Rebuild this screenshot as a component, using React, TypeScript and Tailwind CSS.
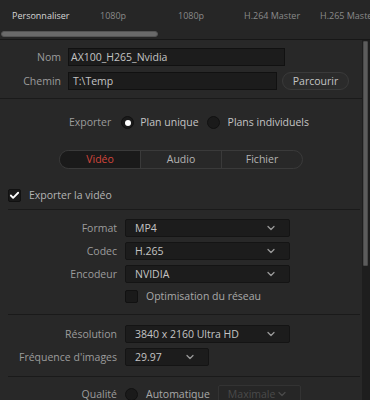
import React from "react";
import { ChevronDown, Check } from "lucide-react";

const presets = ["Personnaliser", "1080p", "1080p", "H.264 Master", "H.265 Master"];

function Label({ children, w = "w-[117px]" }: { children: React.ReactNode; w?: string }) {
  return <span className={`${w} shrink-0 text-right text-[#9c9c9c]`}>{children}</span>;
}

function Select({ value, w, disabled }: { value: string; w: string; disabled?: boolean }) {
  return (
    <div
      className={`${w} h-[18px] flex items-center justify-between pl-[9px] pr-[12px] rounded-[2px] border ${
        disabled ? "border-[#333] bg-[#262626] text-[#4a4a4a]" : "border-[#141414] bg-[#1c1c1c] text-[#c4c4c4]"
      }`}
    >
      <span>{value}</span>
      <ChevronDown className={`w-3 h-3 ${disabled ? "text-[#4a4a4a]" : "text-[#9a9a9a]"}`} strokeWidth={2.5} />
    </div>
  );
}

function Radio({ on }: { on?: boolean }) {
  return (
    <span className="w-[13px] h-[13px] rounded-full bg-[#1a1a1a] border border-[#111] flex items-center justify-center shrink-0">
      {on && <span className="w-[6px] h-[6px] rounded-full bg-white" />}
    </span>
  );
}

function Box({ on }: { on?: boolean }) {
  return (
    <span className="w-[13px] h-[13px] rounded-[2px] bg-[#1a1a1a] border border-[#111] flex items-center justify-center shrink-0">
      {on && <Check className="w-[11px] h-[11px] text-white" strokeWidth={4} />}
    </span>
  );
}

export default function App() {
  return (
    <div
      className="w-[370px] h-[400px] overflow-hidden bg-[#1e1e1e] flex flex-col text-[10.5px] leading-none"
      style={{ fontFamily: '"Open Sans", "Noto Sans", sans-serif' }}
    >
      <div className="h-[40px] shrink-0 bg-[#262626] flex flex-col border-b border-[#171717]">
        <div className="h-[31px] flex items-center whitespace-nowrap overflow-hidden text-[9px]">
          {presets.map((p, i) => (
            <span
              key={i}
              className={`${i === 0 ? "pl-[12px] w-[100px] text-[#d6d6d6]" : i === 1 ? "w-[78px] text-[#8a8a8a]" : i === 2 ? "w-[66px] text-[#8a8a8a]" : i === 3 ? "w-[76px] text-[#8a8a8a]" : "text-[#8a8a8a]"} shrink-0`}
            >
              {p}
            </span>
          ))}
        </div>
        <div className="pl-[1px]">
          <div className="w-[157px] h-[6px] rounded-full bg-[#6a6a6a] border border-[#555]" />
        </div>
      </div>

      <div className="flex-1 flex min-h-0">
        <div className="w-[362px] shrink-0 bg-[#282828] flex flex-col text-[#c4c4c4]">
          <div className="flex flex-col gap-[6px] pt-[8px] pb-[8px] border-b border-[#1a1a1a]">
            <div className="flex items-center gap-[7px]">
              <Label w="w-[61px]">Nom</Label>
              <div className="w-[217px] h-[18px] bg-[#1c1c1c] border border-[#111] flex items-center px-[2px]">
                AX100_H265_Nvidia
              </div>
            </div>
            <div className="flex items-center gap-[7px]">
              <Label w="w-[61px]">Chemin</Label>
              <div className="w-[209px] h-[18px] bg-[#1c1c1c] border border-[#111] flex items-center px-[4px]">
                T:\Temp
              </div>
              <button className="ml-[-2px] w-[67px] h-[18px] rounded-full border border-[#3a3a3a] bg-[#2b2b2b] text-[#c4c4c4]">
                Parcourir
              </button>
            </div>
          </div>

          <div className="flex items-center pt-[17px] pl-[69px] text-[#9c9c9c]">
            <span>Exporter</span>
            <span className="ml-[10px]"><Radio on /></span>
            <span className="ml-[6px] text-[#c4c4c4]">Plan unique</span>
            <span className="ml-[8px]"><Radio /></span>
            <span className="ml-[8px] text-[#c4c4c4]">Plans individuels</span>
          </div>

          <div className="pl-[59px] pt-[21px]">
            <div className="w-[244px] h-[19px] rounded-full border border-[#3a3a3a] flex overflow-hidden">
              <span className="flex-1 flex items-center justify-center bg-[#1a1a1a] text-[#d2463c]">Vidéo</span>
              <span className="flex-1 flex items-center justify-center border-l border-[#3a3a3a] text-[#b4b4b4]">Audio</span>
              <span className="flex-1 flex items-center justify-center border-l border-[#3a3a3a] text-[#b4b4b4]">Fichier</span>
            </div>
          </div>

          <div className="mt-[20px] ml-[8px] mr-[2px] pb-[7px] border-b border-[#1a1a1a] flex items-center gap-[8px] text-[#b4b4b4]">
            <Box on />
            <span>Exporter la vidéo</span>
          </div>

          <div className="flex flex-col gap-[5px] pt-[9px] ml-[8px] mr-[2px] pb-[11px] border-b border-[#1a1a1a]">
            <div className="flex items-center gap-[8px]">
              <Label w="w-[109px]">Format</Label>
              <Select value="MP4" w="w-[165px]" />
            </div>
            <div className="flex items-center gap-[8px]">
              <Label w="w-[109px]">Codec</Label>
              <Select value="H.265" w="w-[165px]" />
            </div>
            <div className="flex items-center gap-[8px]">
              <Label w="w-[109px]">Encodeur</Label>
              <Select value="NVIDIA" w="w-[165px]" />
            </div>
            <div className="flex items-center gap-[8px] pl-[117px] pt-[2px]">
              <Box />
              <span className="text-[#a8a8a8]">Optimisation du réseau</span>
            </div>
          </div>

          <div className="flex flex-col gap-[5px] pt-[10px] ml-[8px] mr-[2px] pb-[10px] border-b border-[#1a1a1a]">
            <div className="flex items-center gap-[8px]">
              <Label w="w-[109px]">Résolution</Label>
              <Select value="3840 x 2160 Ultra HD" w="w-[165px]" />
            </div>
            <div className="flex items-center gap-[8px]">
              <Label w="w-[109px]">Fréquence d'images</Label>
              <Select value="29.97" w="w-[84px]" />
            </div>
          </div>

          <div className="flex items-center gap-[8px] pt-[8px] ml-[8px]">
            <Label w="w-[109px]">Qualité</Label>
            <Radio />
            <span className="text-[#a8a8a8]">Automatique</span>
            <Select value="Maximale" w="w-[83px]" disabled />
          </div>
        </div>

        <div className="flex-1 bg-[#1e1e1e] pt-[1px] pl-[1px]">
          <div className="w-[5px] h-[225px] rounded-[1px] bg-[#5c5c5c] border border-[#4a4a4a]" />
        </div>
      </div>
    </div>
  );
}
